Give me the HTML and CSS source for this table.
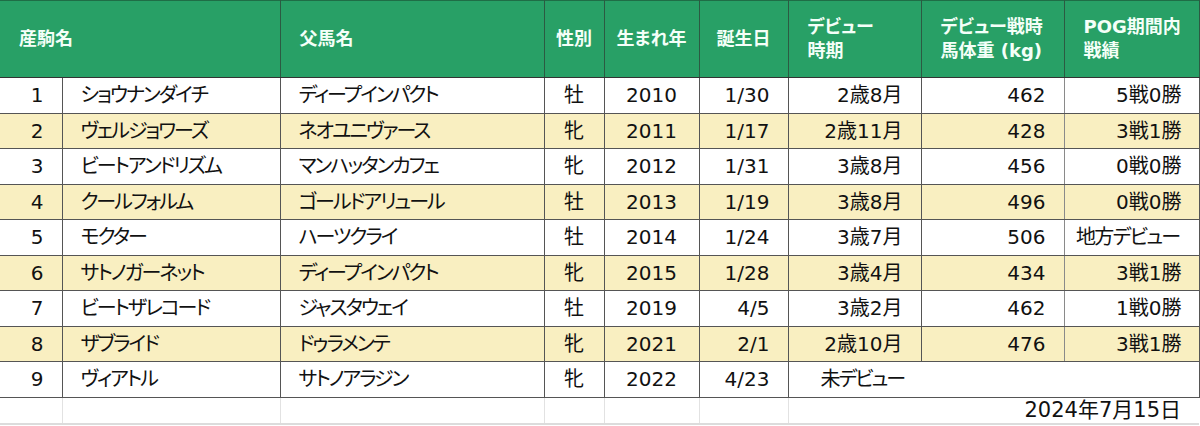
FILE: index.html
```html
<!DOCTYPE html>
<html lang="ja">
<head>
<meta charset="utf-8">
<title>POG</title>
<link rel="stylesheet" href="styles.css">
</head>
<body>
<table class="pog">
  <colgroup>
    <col class="c-no"><col class="c-name"><col class="c-sire"><col class="c-sex"><col class="c-year"><col class="c-bday"><col class="c-debut"><col class="c-weight"><col class="c-record">
  </colgroup>
  <thead>
    <tr>
      <th colspan="2" class="hl">産駒名</th>
      <th class="hl">父馬名</th>
      <th class="hc">性別</th>
      <th class="hc">生まれ年</th>
      <th class="hc">誕生日</th>
      <th class="hl">デビュー<br>時期</th>
      <th class="hl">デビュー戦時<br>馬体重 (kg)</th>
      <th class="hl">POG期間内<br>戦績</th>
    </tr>
  </thead>
  <tbody>
    <tr><td class="no">1</td><td class="tl">ショウナンダイチ</td><td class="tl">ディープインパクト</td><td class="tc">牡</td><td class="tc">2010</td><td class="tr">1/30</td><td class="tr">2歳8月</td><td class="tr wt">462</td><td class="tr rc">5戦0勝</td></tr>
    <tr class="alt"><td class="no">2</td><td class="tl">ヴェルジョワーズ</td><td class="tl">ネオユニヴァース</td><td class="tc">牝</td><td class="tc">2011</td><td class="tr">1/17</td><td class="tr">2歳11月</td><td class="tr wt">428</td><td class="tr rc">3戦1勝</td></tr>
    <tr><td class="no">3</td><td class="tl">ビートアンドリズム</td><td class="tl">マンハッタンカフェ</td><td class="tc">牝</td><td class="tc">2012</td><td class="tr">1/31</td><td class="tr">3歳8月</td><td class="tr wt">456</td><td class="tr rc">0戦0勝</td></tr>
    <tr class="alt"><td class="no">4</td><td class="tl">クールフォルム</td><td class="tl">ゴールドアリュール</td><td class="tc">牡</td><td class="tc">2013</td><td class="tr">1/19</td><td class="tr">3歳8月</td><td class="tr wt">496</td><td class="tr rc">0戦0勝</td></tr>
    <tr><td class="no">5</td><td class="tl">モクター</td><td class="tl">ハーツクライ</td><td class="tc">牡</td><td class="tc">2014</td><td class="tr">1/24</td><td class="tr">3歳7月</td><td class="tr wt">506</td><td class="tr rc kana">地方デビュー</td></tr>
    <tr class="alt"><td class="no">6</td><td class="tl">サトノガーネット</td><td class="tl">ディープインパクト</td><td class="tc">牝</td><td class="tc">2015</td><td class="tr">1/28</td><td class="tr">3歳4月</td><td class="tr wt">434</td><td class="tr rc">3戦1勝</td></tr>
    <tr><td class="no">7</td><td class="tl">ビートザレコード</td><td class="tl">ジャスタウェイ</td><td class="tc">牡</td><td class="tc">2019</td><td class="tr">4/5</td><td class="tr">3歳2月</td><td class="tr wt">462</td><td class="tr rc">1戦0勝</td></tr>
    <tr class="alt"><td class="no">8</td><td class="tl">ザブライド</td><td class="tl">ドゥラメンテ</td><td class="tc">牝</td><td class="tc">2021</td><td class="tr">2/1</td><td class="tr">2歳10月</td><td class="tr wt">476</td><td class="tr rc">3戦1勝</td></tr>
    <tr><td class="no">9</td><td class="tl">ヴィアトル</td><td class="tl">サトノアラジン</td><td class="tc">牝</td><td class="tc">2022</td><td class="tr">4/23</td><td colspan="3" class="nodebut">未デビュー</td></tr>
    <tr class="foot"><td></td><td></td><td></td><td></td><td></td><td></td><td colspan="3" class="date">2024年7月15日</td></tr>
  </tbody>
</table>
</body>
</html>
```

FILE: styles.css
```css
html, body {
  margin: 0;
  padding: 0;
  background: #ffffff;
}

body {
  font-family: "DejaVu Sans", "Noto Sans CJK JP", sans-serif;
  font-feature-settings: "palt";
  color: #111111;
}

.pog {
  border-collapse: collapse;
  table-layout: fixed;
  width: 1199px;
}

.c-no { width: 62px; }
.c-name { width: 218px; }
.c-sire { width: 264px; }
.c-sex { width: 60px; }
.c-year { width: 95px; }
.c-bday { width: 89px; }
.c-debut { width: 133px; }
.c-weight { width: 143px; }
.c-record { width: 135px; }

.pog th {
  height: 77px;
  padding: 0;
  background: #28a066;
  color: #f4fff8;
  font-size: 18px;
  font-weight: bold;
  line-height: 24px;
  vertical-align: middle;
  border-top: 1px solid #1f6d46;
  border-right: 1px solid #2c5a42;
  border-bottom: 1px solid #333333;
  box-sizing: border-box;
  white-space: nowrap;
}

.pog th.hl {
  text-align: left;
  padding-left: 19px;
}

.pog th.hc {
  text-align: center;
}

.pog td {
  height: 35.5px;
  padding: 0;
  font-size: 20px;
  line-height: 24px;
  vertical-align: middle;
  border-right: 1px solid #555555;
  border-bottom: 1px solid #555555;
  white-space: nowrap;
  box-sizing: border-box;
}

.pog tr.alt td {
  background: #f9efc1;
}

.pog td.no {
  text-align: right;
  padding-right: 18px;
}

.pog td.tl {
  text-align: left;
  padding-left: 18px;
  letter-spacing: -2px;
}

.pog td.tc {
  text-align: center;
}

.pog td.tr {
  text-align: right;
  padding-right: 18px;
}

.pog td.wt {
  border-right-color: #8a8a8a;
}

.pog td.rc {
  padding-right: 17px;
}

.pog td.kana {
  letter-spacing: -1.7px;
  padding-right: 19px;
}

.pog td.nodebut {
  text-align: left;
  padding-left: 32px;
  letter-spacing: -2px;
}

.pog tr.foot td {
  height: 27px;
  border-right: 1px solid #e2e2e2;
  border-bottom: 2px solid #dcdcdc;
  background: #ffffff;
}

.pog tr.foot td.date {
  border-right: none;
  text-align: right;
  padding-right: 18px;
  font-size: 21px;
}
```
